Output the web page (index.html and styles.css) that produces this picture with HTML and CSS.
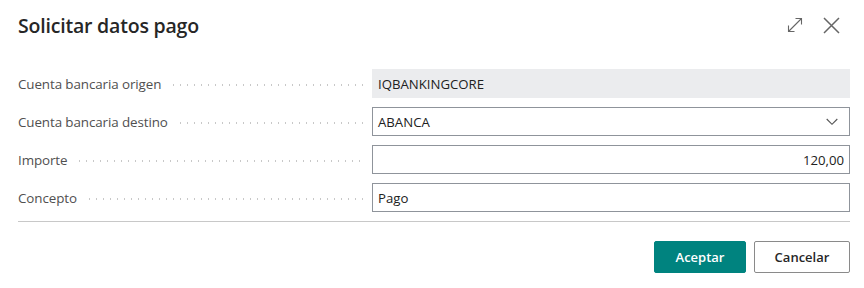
FILE: index.html
```html
<!DOCTYPE html>
<html lang="es">
<head>
<meta charset="utf-8">
<title>Solicitar datos pago</title>
<link rel="stylesheet" href="styles.css">
</head>
<body>
<div class="dialog">
  <header class="head">
    <h1 class="title">Solicitar datos pago</h1>
    <div class="tools">
      <svg class="ico" width="16" height="16" viewBox="0 0 16 16"><path d="M1.5 14.5 L14.5 1.5 M8.5 1.5 H14.5 V7.5 M1.5 8.5 V14.5 H7.5" fill="none" stroke="#666" stroke-width="1.1"/></svg>
      <svg class="ico close" width="17" height="17" viewBox="0 0 17 17"><path d="M1 1 L16 16 M16 1 L1 16" fill="none" stroke="#666" stroke-width="1.5"/></svg>
    </div>
  </header>
  <div class="form">
    <div class="row">
      <div class="label"><span>Cuenta bancaria origen</span><i class="dots"></i></div>
      <div class="field ro">IQBANKINGCORE</div>
    </div>
    <div class="row">
      <div class="label"><span>Cuenta bancaria destino</span><i class="dots"></i></div>
      <div class="field sel"><span>ABANCA</span><svg width="12" height="8" viewBox="0 0 12 8"><path d="M0.7 1 L6 6.3 L11.3 1" fill="none" stroke="#555" stroke-width="1.1"/></svg></div>
    </div>
    <div class="row">
      <div class="label"><span>Importe</span><i class="dots"></i></div>
      <div class="field num">120,00</div>
    </div>
    <div class="row">
      <div class="label"><span>Concepto</span><i class="dots"></i></div>
      <div class="field">Pago</div>
    </div>
  </div>
  <div class="sep"></div>
  <div class="actions">
    <button class="btn primary">Aceptar</button>
    <button class="btn">Cancelar</button>
  </div>
</div>
</body>
</html>
```
FILE: styles.css
```css
html, body { margin: 0; padding: 0; background: #fff; }
body { font-family: "Open Sans", "Noto Sans", sans-serif; color: #212121; }
.dialog { padding: 0 14px 0 18px; width: 832px; }
.head { display: flex; align-items: center; justify-content: space-between; height: 50px; }
.title { margin: 0; font-size: 19.5px; font-weight: 600; color: #262626; letter-spacing: -0.2px; padding-top: 1px; }
.tools { display: flex; align-items: center; gap: 20px; padding-right: 10px; padding-top: 0; }
.ico { display: block; }
.form { display: flex; flex-direction: column; gap: 9px; padding-top: 19px; }
.row { display: grid; grid-template-columns: 354px 1fr; height: 29px; }
.label { display: flex; align-items: center; font-size: 13.4px; color: #505050; padding-right: 7px; letter-spacing: -0.1px; }
.label span { white-space: nowrap; }
.dots { flex: 1; height: 2px; margin-left: 9px; margin-top: 3px; background-image: radial-gradient(circle, #c8c8c8 0.9px, transparent 1.1px); background-size: 7px 2px; background-repeat: repeat-x; background-position: left center; }
.field { box-sizing: border-box; height: 29px; border: 1px solid #8f949b; display: flex; align-items: center; padding: 0 6px 0 5px; font-size: 13.2px; color: #212121; }
.field.ro { background: #ebecee; border-color: #ebecee; }
.field.sel { justify-content: space-between; padding-right: 11px; }
.field.sel svg { display: block; }
.field.num { justify-content: flex-end; padding-right: 5px; }
.sep { height: 1px; background: #c8c8c8; margin-top: 9px; }
.actions { display: flex; justify-content: flex-end; gap: 8px; padding-top: 19px; }
.btn { box-sizing: border-box; height: 32px; font-family: inherit; font-size: 13px; font-weight: 600; border-radius: 2px; border: 1px solid #8a8a8a; background: #fff; color: #262626; padding: 0; width: 96px; }
.btn.primary { background: #00837f; border-color: #00837f; color: #fff; width: 92px; }
```
